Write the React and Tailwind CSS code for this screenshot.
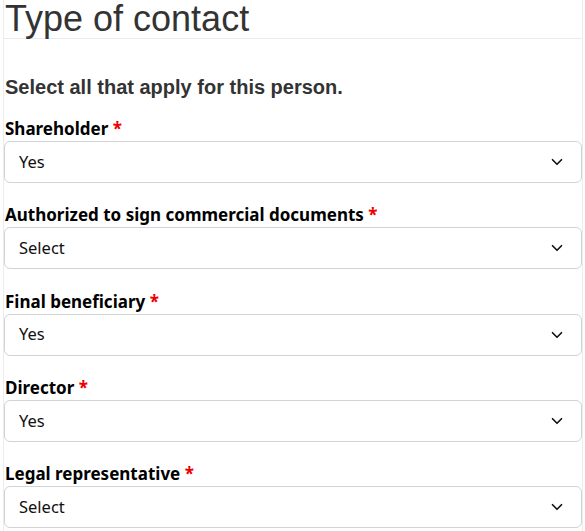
import React from 'react';

const fields = [
  { label: 'Shareholder', value: 'Yes' },
  { label: 'Authorized to sign commercial documents', value: 'Select' },
  { label: 'Final beneficiary', value: 'Yes' },
  { label: 'Director', value: 'Yes' },
  { label: 'Legal representative', value: 'Select' },
];

const Chevron = () => (
  <svg width="16" height="12" viewBox="0 0 16 16" className="shrink-0">
    <path d="m2 5 6 6 6-6" fill="none" stroke="#111" strokeWidth="2.2" strokeLinecap="round" strokeLinejoin="round" />
  </svg>
);

const App = () => {
  return (
    <div className="ml-[3px] w-[580px] min-h-[531px] border-x border-[#ececec] bg-white">
      <div className="h-[39px] border-b border-[#eaeaea]">
        <h2 className="pl-[1px] text-[36px] leading-[38px] text-[#333] font-['Liberation_Sans',Arial,sans-serif]">
          Type of contact
        </h2>
      </div>
      <p className="mt-[36px] pl-[1px] text-[20px] leading-[24px] font-bold text-[#333] font-['Liberation_Sans',Arial,sans-serif]">
        Select all that apply for this person.
      </p>
      <div className="mt-[18px] flex flex-col gap-[20.3px] font-['Noto_Sans',sans-serif]">
        {fields.map((f) => (
          <div key={f.label}>
            <div className="pl-[1px] text-[17px] leading-[24px] font-bold text-black">
              {f.label} <span className="text-[#e00]">*</span>
            </div>
            <div className="flex h-[42px] items-center justify-between rounded-[6px] border border-[#d0d4d8] pl-[14px] pr-[16px] text-[16.5px] text-[#111]">
              <span>{f.value}</span>
              <Chevron />
            </div>
          </div>
        ))}
      </div>
    </div>
  );
};

export default App;
